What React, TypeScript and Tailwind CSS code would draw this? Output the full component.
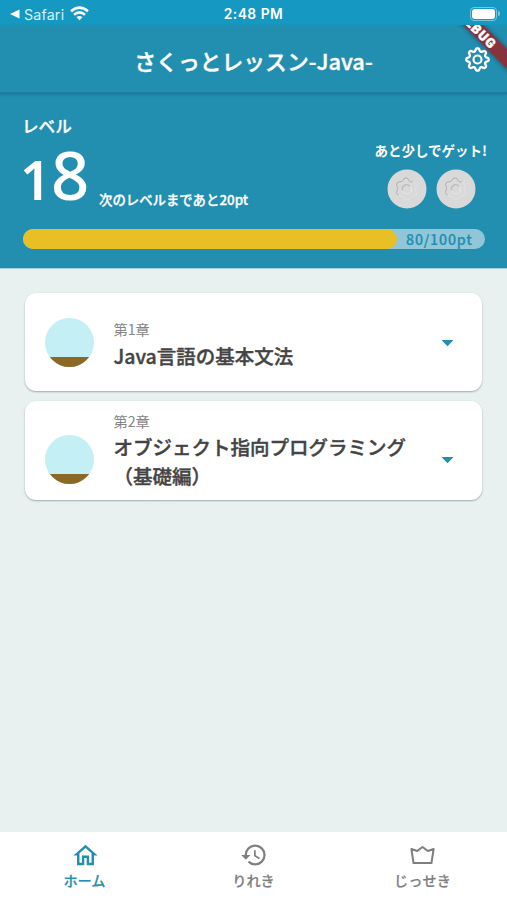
import React from "react";
import { MdHistory, MdOutlineHome, MdArrowDropDown } from "react-icons/md";

const JP = "font-['Noto_Sans_CJK_JP',sans-serif]";

// Closed outline of a gear whose teeth rise and fall in a smooth wave
function gearPath(cx: number, cy: number, radius: number, depth: number, teeth: number, sharpness: number) {
  const points: string[] = [];
  const samples = teeth * 20;
  for (let i = 0; i < samples; i++) {
    const angle = (i / samples) * Math.PI * 2 - Math.PI / 2;
    const wave = Math.tanh(sharpness * Math.cos((angle + Math.PI / 2) * teeth)) / Math.tanh(sharpness);
    const r = radius + depth * wave;
    points.push(`${(cx + Math.cos(angle) * r).toFixed(2)} ${(cy + Math.sin(angle) * r).toFixed(2)}`);
  }
  return `M${points.join("L")}Z`;
}

function StatusBar() {
  return (
    <div className="grid h-[25px] shrink-0 grid-cols-3 items-center bg-[#1598c1] px-[9px] font-[Inter,sans-serif] text-white">
      <div className="flex items-center">
        <svg className="h-[10px] w-[11px]" viewBox="0 0 11 10" fill="currentColor">
          <path d="M1 5L10.500 0.500V9.500Z" />
        </svg>
        <span className="ml-[4px] mt-px text-[14.200px] leading-[25px] tracking-[0.2px] text-[#d3f4fc]">Safari</span>
        <svg className="ml-[6px] h-[15px] w-[19px]" viewBox="0 0 19 15" fill="none" stroke="currentColor" strokeWidth="2.500">
          <path d="M1 5.300Q9.500-2 18 5.300" />
          <path d="M4 8.700Q9.500 4 15 8.700" />
          <path d="M6.500 11.300Q9.500 8.800 12.500 11.300L9.500 14.300Z" fill="currentColor" stroke="none" />
        </svg>
      </div>
      <div className="mt-[2px] whitespace-nowrap text-center text-[13.800px] font-semibold leading-[25px] tracking-[0.5px]">2:48 PM</div>
      <div className="flex items-center justify-end">
        <div className="mr-px h-[14px] w-[27px] rounded-[4px] border border-[#75c8df] p-px">
          <div className="h-full rounded-[3px] bg-white" />
        </div>
        <div className="-mr-[2px] h-[5px] w-[2px] rounded-r-full bg-[#75c8df]" />
      </div>
    </div>
  );
}

function AppBar() {
  return (
    <header className="relative z-10 flex h-[69px] shrink-0 items-center justify-center overflow-hidden border-b-2 border-[#1d7d9e] bg-[#228eb0] shadow-[0_1px_2px_#1d7d9e]">
      <h1 className="mt-[4px] whitespace-nowrap text-[21.800px] font-medium leading-[30px] text-white [-webkit-text-stroke:0.4px]">さくっとレッスン-Java-</h1>
      <svg className="absolute left-[464px] top-[21px] h-[27px] w-[27px]" viewBox="0 0 27 27" fill="none" stroke="white" strokeLinejoin="round">
        <path d={gearPath(13.5, 13.5, 9.8, 1.4, 8, 1.3)} strokeWidth="2.300" />
        <circle cx="13.500" cy="13.500" r="4" strokeWidth="2.200" />
      </svg>
      <svg className="absolute right-0 top-0 h-[60px] w-[60px]" viewBox="0 0 60 60">
        <defs>
          <filter id="bannerShadow" x="-20%" y="-20%" width="140%" height="140%">
            <feDropShadow dx="0" dy="0" stdDeviation="2.500" floodColor="#000" floodOpacity="0.45" />
          </filter>
        </defs>
        <path d="M-4-20H16L80 44V64Z" fill="#88303c" filter="url(#bannerShadow)" />
        <text
          transform="translate(30.500 5) rotate(45)"
          y="4.500"
          textAnchor="middle"
          fill="white"
          stroke="white"
          strokeWidth="0.500"
          className="font-[Roboto,sans-serif] text-[13px] font-black tracking-[1.100px]"
        >
          DEBUG
        </text>
      </svg>
    </header>
  );
}

function Coin() {
  const gear = gearPath(19, 19.5, 9.3, 1.1, 6, 0.8);
  return (
    <svg className="h-[40px] w-[40px]" viewBox="0 0 40 40" fill="none" strokeLinejoin="round" strokeLinecap="round">
      <circle cx="20" cy="20" r="19.500" fill="#d9d9d9" />
      <path d={gear} transform="translate(1 1)" stroke="#e4e4e4" strokeWidth="1" />
      <path d={gear} stroke="#b4b4b4" strokeWidth="1.100" pathLength="100" strokeDasharray="12 52 10 2 24 0" />
      <circle cx="20" cy="20.500" r="4.500" stroke="#e6e6e6" strokeWidth="1.200" />
      <path d="M15.500 21A4.200 4.200 0 0 1 22.500 17" stroke="#b9b9b9" strokeWidth="1.200" />
    </svg>
  );
}

function LevelPanel() {
  return (
    <section className="flex h-[175px] shrink-0 flex-col border-b border-[#a9d0dd] bg-[#228eb0] pl-[23px] pr-[20px] pt-[20px] text-white">
      <div className="flex h-[115px] justify-between">
        <div>
          <div className="-ml-px h-[26px] text-[16.600px] font-medium leading-[25px] [-webkit-text-stroke:0.3px]">レベル</div>
          <div className="flex h-[89px] items-start">
            <div className="flex w-[76px] items-baseline font-['Noto_Sans',sans-serif] leading-[69px]">
              <span className="-ml-[3px] w-[31px] text-[54px] font-semibold">1</span>
              <span className="text-[67px] font-medium">8</span>
            </div>
            <span className="mt-[50px] text-[13.400px] font-medium leading-[19px] [-webkit-text-stroke:0.3px]">次のレベルまであと20pt</span>
          </div>
        </div>
        <div className="mt-[27px] flex flex-col items-end">
          <div className="text-[13.500px] font-bold leading-[19px]">あと少しでゲット!</div>
          <div className="mr-[11px] mt-[9px] flex gap-[9px]">
            <Coin />
            <Coin />
          </div>
        </div>
      </div>
      <div className="mr-[2px] flex h-[20px] rounded-full bg-[#90c6d8]">
        <div className="w-[374px] rounded-full bg-[#e9bf26]" />
        <span className="ml-[9px] text-[14.200px] font-medium leading-[20px] tracking-[0.8px] text-[#228eb0] [-webkit-text-stroke:0.2px]">80/100pt</span>
      </div>
    </section>
  );
}

function ChapterCard({ label, lines, size, offset, gap }: { label: string; lines: string[]; size: string; offset: string; gap: string }) {
  return (
    <article className={`flex rounded-[11px] bg-white pl-[20px] pr-[20px] shadow-[0_1px_2px_rgba(0,0,0,0.3)] ${size}`}>
      <div className={`flex shrink-0 items-center ${offset}`}>
        <div className="h-[49px] w-[49px] overflow-hidden rounded-full bg-[#c4eff5] pt-[39px]">
          <div className="h-[10px] bg-[#8c6827]" />
        </div>
      </div>
      <div className="ml-[19.500px] flex-1 self-center">
        <div className={`text-[14.200px] text-[#858585] ${gap}`}>{label}</div>
        {lines.map((line) => (
          <div key={line} className="whitespace-nowrap text-[19.500px] font-medium leading-[29px] text-[#444444] [-webkit-text-stroke:0.4px]">
            {line}
          </div>
        ))}
      </div>
      <div className={`flex shrink-0 items-center ${offset}`}>
        <MdArrowDropDown className="h-[29px] w-[29px] text-[#228eb0]" />
      </div>
    </article>
  );
}

function CrownIcon() {
  return (
    <svg className="h-[27px] w-[27px]" viewBox="0 0 27 27" fill="none" stroke="currentColor" strokeWidth="2" strokeLinejoin="round">
      <path d="M2.400 8L4.500 22H22.500L24.600 8L18.800 10L13.500 6L8.200 10Z" />
    </svg>
  );
}

function NavItem({ icon, label, color }: { icon: React.ReactNode; label: string; color: string }) {
  return (
    <div className={`flex flex-col items-center pt-[9px] ${color}`}>
      {icon}
      <span className="text-[14.200px] font-medium leading-[25px] [-webkit-text-stroke:0.2px]">{label}</span>
    </div>
  );
}

export default function App() {
  return (
    <div className={`flex h-[900px] w-[507px] flex-col overflow-hidden bg-[#e8f0f0] ${JP}`}>
      <StatusBar />
      <AppBar />
      <LevelPanel />
      <main className="flex flex-1 flex-col gap-[10px] px-[25px] pt-[24px]">
        <ChapterCard label="第1章" lines={["Java言語の基本文法"]} size="h-[98px]" offset="pt-0" gap="pt-[3px] leading-[23px]" />
        <ChapterCard label="第2章" lines={["オブジェクト指向プログラミング", "（基礎編）"]} size="h-[99px]" offset="pt-[17px]" gap="pt-0 leading-[21px]" />
      </main>
      <nav className="grid h-[68px] shrink-0 grid-cols-3 bg-white">
        <NavItem icon={<MdOutlineHome className="-mb-[2px] ml-px h-[29px] w-[29px]" />} label="ホーム" color="text-[#228eb0]" />
        <NavItem icon={<MdHistory className="-mb-px h-[28px] w-[28px]" />} label="りれき" color="text-[#7f7f7f]" />
        <NavItem icon={<CrownIcon />} label="じっせき" color="text-[#7f7f7f]" />
      </nav>
    </div>
  );
}
